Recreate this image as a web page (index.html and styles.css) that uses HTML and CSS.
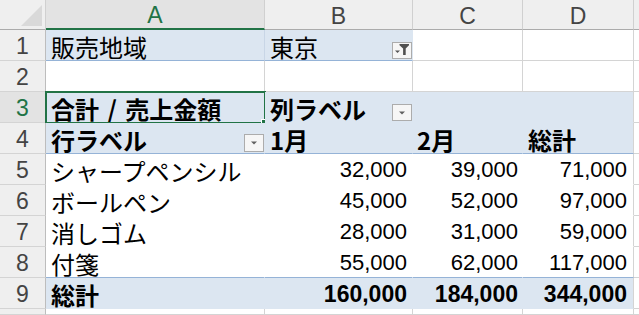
FILE: index.html
```html
<!DOCTYPE html>
<html lang="ja">
<head>
<meta charset="utf-8">
<link rel="stylesheet" href="styles.css">
</head>
<body>
<div class="sheet">
  <!-- header row -->
  <div class="c hdr corner"><span class="tri"></span></div>
  <div class="c hdr colh sel-col">A</div>
  <div class="c hdr colh">B</div>
  <div class="c hdr colh">C</div>
  <div class="c hdr colh">D</div>
  <div class="c hdr colh last"></div>

  <!-- row 1 -->
  <div class="c hdr rowh">1</div>
  <div class="c blue r1 r1a jp">販売地域</div>
  <div class="c blue r1 jp btncell">東京<span class="btn"><svg width="20" height="17" viewBox="0 0 20 17"><path d="M3 8.5h5l-2.5 2.5z" fill="#555"/><path d="M7.5 2h9.5v1.2l-3.3 3.3v6.5h-2.6v-6.5l-3.6-3.3z" fill="#505050"/></svg></span></div>
  <div class="c"></div>
  <div class="c"></div>
  <div class="c last"></div>

  <!-- row 2 -->
  <div class="c hdr rowh">2</div>
  <div class="c"></div>
  <div class="c"></div>
  <div class="c"></div>
  <div class="c"></div>
  <div class="c last"></div>

  <!-- row 3 -->
  <div class="c hdr rowh sel-row">3</div>
  <div class="c blue jp b active">合計 / 売上金額<span class="selbox"></span><span class="handle"></span></div>
  <div class="c blue jp b btncell">列ラベル<span class="btn"><svg width="20" height="17" viewBox="0 0 20 17"><path d="M7 7.5h6l-3 3z" fill="#606060"/></svg></span></div>
  <div class="c blue"></div>
  <div class="c blue dl"></div>
  <div class="c last"></div>

  <!-- row 4 -->
  <div class="c hdr rowh">4</div>
  <div class="c blue jp b bl btncell">行ラベル<span class="btn tall"><svg width="20" height="18" viewBox="0 0 20 18"><path d="M7 7.5h6l-3 3z" fill="#606060"/></svg></span></div>
  <div class="c blue jp b bl">1月</div>
  <div class="c blue jp b bl cc">2月</div>
  <div class="c blue jp b bl dl">総計</div>
  <div class="c last"></div>

  <!-- row 5 -->
  <div class="c hdr rowh">5</div>
  <div class="c piv jp">シャープペンシル</div>
  <div class="c piv num nb">32,000</div>
  <div class="c piv num nc">39,000</div>
  <div class="c piv num nd dl">71,000</div>
  <div class="c last"></div>

  <!-- row 6 -->
  <div class="c hdr rowh">6</div>
  <div class="c piv jp">ボールペン</div>
  <div class="c piv num nb">45,000</div>
  <div class="c piv num nc">52,000</div>
  <div class="c piv num nd dl">97,000</div>
  <div class="c last"></div>

  <!-- row 7 -->
  <div class="c hdr rowh">7</div>
  <div class="c piv jp">消しゴム</div>
  <div class="c piv num nb">28,000</div>
  <div class="c piv num nc">31,000</div>
  <div class="c piv num nd dl">59,000</div>
  <div class="c last"></div>

  <!-- row 8 -->
  <div class="c hdr rowh">8</div>
  <div class="c piv jp bl">付箋</div>
  <div class="c piv num nb bl">55,000</div>
  <div class="c piv num nc bl">62,000</div>
  <div class="c piv num nd bl dl">117,000</div>
  <div class="c last"></div>

  <!-- row 9 -->
  <div class="c hdr rowh">9</div>
  <div class="c blue jp b">総計</div>
  <div class="c blue num b nb">160,000</div>
  <div class="c blue num b nc">184,000</div>
  <div class="c blue num b nd dl">344,000</div>
  <div class="c last"></div>

  <!-- row 10 (partial) -->
  <div class="c hdr rowh"></div>
  <div class="c"></div>
  <div class="c"></div>
  <div class="c"></div>
  <div class="c"></div>
  <div class="c last"></div>
</div>
</body>
</html>
```

FILE: styles.css
```css
html, body {
  margin: 0;
  padding: 0;
  background: #ffffff;
}
body {
  width: 639px;
  height: 315px;
  overflow: hidden;
  font-family: "Liberation Sans", "Noto Sans CJK JP", sans-serif;
  color: #000;
}
.sheet {
  display: grid;
  grid-template-columns: 46px 219px 148px 110px 111px 1fr;
  grid-template-rows: 30px repeat(9, 31px) 1fr;
  width: 639px;
  height: 315px;
  overflow: hidden;
}
.c {
  box-sizing: border-box;
  border-right: 1px solid #d4d4d4;
  border-bottom: 1px solid #d4d4d4;
  display: flex;
  align-items: center;
  padding: 0 5px;
  white-space: nowrap;
  line-height: 1;
  position: relative;
  min-width: 0;
}
.last { border-right: none; }

/* headers */
.hdr {
  background: #efefef;
  color: #444;
  font-size: 23px;
  justify-content: center;
  padding: 0;
}
.colh {
  border-bottom: 1px solid #ababab;
  border-right: 1px solid #d0d0d0;
  padding-top: 3px;
}
.colh.last { border-right: none; }
.corner {
  border-bottom: 1px solid #ababab;
  border-right: 1px solid #d0d0d0;
}
.tri {
  position: absolute;
  right: 3px;
  bottom: 3px;
  width: 0;
  height: 0;
  border-left: 21px solid transparent;
  border-bottom: 21px solid #d9d9d9;
}
.rowh {
  border-right: 1px solid #bdbdbd;
  border-bottom: 1px solid #d4d4d4;
  padding-top: 2px;
}
.sel-col {
  background: #e3e3e3;
  color: #217346;
  border-bottom: 2px solid #217346;
}
.sel-row {
  background: #e3e3e3;
  color: #217346;
}

/* pivot */
.blue {
  background: #dce6f1;
  border-right-color: #dce6f1;
  border-bottom-color: #dce6f1;
}
.r1 { border-bottom-color: #95b3d7; }
.r1a { border-right-color: #c9d6e6; }
.piv {
  border-right-color: #fff;
  border-bottom-color: #fff;
}
.bl { border-bottom-color: #95b3d7; }
.dl { border-right-color: #d4d4d4; }

.jp {
  font-family: "Noto Sans CJK JP", sans-serif;
  font-size: 24px;
  padding-top: 3px;
}
.jp.b { font-weight: 700; }
.cc { padding-left: 4px; }
.active { word-spacing: 3px; }

.num {
  font-family: "Liberation Sans", sans-serif;
  font-size: 22px;
  justify-content: flex-end;
  padding-top: 2px;
}
.num.b { font-size: 23px; font-weight: 700; }
.nb { padding-right: 5px; }
.nc { padding-right: 4px; }
.nd { padding-right: 6px; }

/* filter buttons */
.btncell { padding-right: 0; }
.btn {
  margin-left: auto;
  align-self: flex-end;
  margin-bottom: 1px;
  width: 20px;
  height: 17px;
  box-sizing: border-box;
  border: 1px solid #acacac;
  background: #f6f6f6;
  display: block;
  overflow: hidden;
}
.btn svg {
  display: block;
  margin: -1px 0 0 -1px;
}
.btn.tall { height: 18px; }

/* active cell */
.selbox {
  position: absolute;
  left: -1px;
  top: -1px;
  right: -2px;
  bottom: -2px;
  border: 2px solid #217346;
  pointer-events: none;
}
.handle {
  position: absolute;
  right: -4px;
  bottom: -4px;
  width: 5px;
  height: 5px;
  background: #217346;
  border: 1px solid #fff;
}
```
